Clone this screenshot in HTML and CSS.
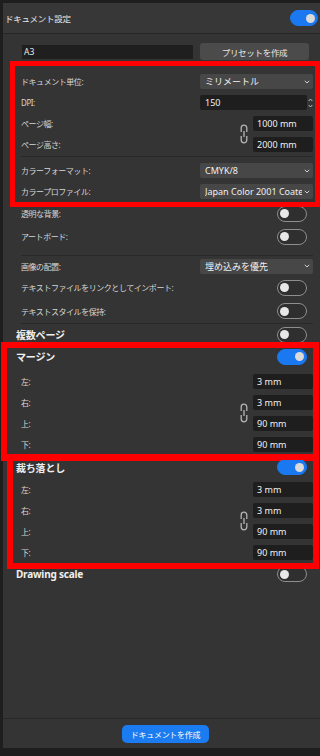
FILE: index.html
```html
<!DOCTYPE html>
<html lang="ja">
  <head>
    <meta charset="UTF-8" />
    <meta name="viewport" content="width=device-width, initial-scale=1.0" />
    <title>ドキュメント設定</title>
    <link rel="stylesheet" href="styles.css">
  </head>
  <body>
    <div class="panel">
      <div class="panel-header">
        <span class="panel-title">ドキュメント設定</span>
        <span class="toggle on"></span>
      </div>

      <div class="panel-body">
        <div class="preset-row">
          <span class="preset-name">A3</span>
          <button class="btn-grey">プリセットを作成</button>
        </div>

        <div class="mark mark-doc">
          <div class="row">
            <span class="label">ドキュメント単位:</span>
            <span class="select"><span class="select-text">ミリメートル</span><svg class="chev" viewBox="0 0 6 4"><path d="M0.8 0.8 L3 3 L5.2 0.8" /></svg></span>
          </div>
          <div class="row">
            <span class="label">DPI:</span>
            <span class="spin">
              <span class="field">150</span>
              <svg class="spin-arrows" viewBox="0 0 5 12"><path d="M0.7 4 L2.5 2 L4.3 4 M0.7 8 L2.5 10 L4.3 8" /></svg>
            </span>
          </div>
          <div class="linked">
            <span class="label r1">ページ幅:</span>
            <span class="label r2">ページ高さ:</span>
            <svg class="chain rows-12" viewBox="0 0 8 20"><path d="M1.2 8 V4 a2.8 2.8 0 0 1 5.6 0 V8 M1.2 12 V16 a2.8 2.8 0 0 0 5.6 0 V12 M4 7 V13" /></svg>
            <span class="num r1">1000 mm</span>
            <span class="num r2">2000 mm</span>
          </div>
          <div class="sep sep-doc"></div>
          <div class="row">
            <span class="label">カラーフォーマット:</span>
            <span class="select"><span class="select-text">CMYK/8</span><svg class="chev" viewBox="0 0 6 4"><path d="M0.8 0.8 L3 3 L5.2 0.8" /></svg></span>
          </div>
          <div class="row">
            <span class="label">カラープロファイル:</span>
            <span class="select"><span class="select-text">Japan Color 2001 Coated</span><svg class="chev" viewBox="0 0 6 4"><path d="M0.8 0.8 L3 3 L5.2 0.8" /></svg></span>
          </div>
        </div>

        <div class="row row-tall">
          <span class="label">透明な背景:</span>
          <span class="toggle"></span>
        </div>
        <div class="row row-tall">
          <span class="label">アートボード:</span>
          <span class="toggle"></span>
        </div>
        <div class="sep sep-mid"></div>
        <div class="row row-place">
          <span class="label">画像の配置:</span>
          <span class="select"><span class="select-text">埋め込みを優先</span><svg class="chev" viewBox="0 0 6 4"><path d="M0.8 0.8 L3 3 L5.2 0.8" /></svg></span>
        </div>
        <div class="row row-tall">
          <span class="label">テキストファイルをリンクとしてインポート:</span>
          <span class="toggle"></span>
        </div>
        <div class="row row-style">
          <span class="label">テキストスタイルを保持:</span>
          <span class="toggle"></span>
        </div>
        <div class="sep"></div>
        <div class="row row-heading row-pages">
          <span class="heading">複数ページ</span>
          <span class="toggle"></span>
        </div>

        <div class="mark mark-margin">
          <div class="row row-heading row-margin-head">
            <span class="heading">マージン</span>
            <span class="toggle on"></span>
          </div>
          <div class="linked four margin-grid">
            <span class="label r1">左:</span>
            <span class="label r2">右:</span>
            <span class="label r3">上:</span>
            <span class="label r4">下:</span>
            <svg class="chain rows-23" viewBox="0 0 8 20"><path d="M1.2 8 V4 a2.8 2.8 0 0 1 5.6 0 V8 M1.2 12 V16 a2.8 2.8 0 0 0 5.6 0 V12 M4 7 V13" /></svg>
            <span class="num r1">3 mm</span>
            <span class="num r2">3 mm</span>
            <span class="num r3">90 mm</span>
            <span class="num r4">90 mm</span>
          </div>
        </div>

        <div class="mark mark-bleed">
          <div class="row row-heading row-bleed-head">
            <span class="heading">裁ち落とし</span>
            <span class="toggle on"></span>
          </div>
          <div class="linked four bleed-grid">
            <span class="label r1">左:</span>
            <span class="label r2">右:</span>
            <span class="label r3">上:</span>
            <span class="label r4">下:</span>
            <svg class="chain rows-23" viewBox="0 0 8 20"><path d="M1.2 8 V4 a2.8 2.8 0 0 1 5.6 0 V8 M1.2 12 V16 a2.8 2.8 0 0 0 5.6 0 V12 M4 7 V13" /></svg>
            <span class="num r1">3 mm</span>
            <span class="num r2">3 mm</span>
            <span class="num r3">90 mm</span>
            <span class="num r4">90 mm</span>
          </div>
        </div>

        <div class="row row-heading row-scale">
          <span class="heading">Drawing scale</span>
          <span class="toggle"></span>
        </div>
      </div>

      <div class="panel-footer">
        <button class="btn-blue">ドキュメントを作成</button>
      </div>
    </div>
  </body>
</html>
```

FILE: styles.css
```css
body {
  margin: 0;
  padding: 0;
  background: #1e1e1e;
  font-family: "Noto Sans", "Noto Sans CJK JP", sans-serif;
  color: #dcdcdc;
  overflow: hidden;
}
.panel {
  margin: 3px 0 0 3px;
  width: 317px;
  height: 745px;
  background: #343434;
  display: flex;
  flex-direction: column;
}
.panel-header {
  height: 30px;
  border-bottom: 1px solid #262626;
  background: #373737;
  display: flex;
  align-items: center;
  justify-content: space-between;
  padding: 0 2px 0 2px;
}
.panel-title {
  font-size: 8.5px;
  letter-spacing: -0.3px;
  color: #e6e6e6;
}
.panel-body {
  padding: 0 7px 0 18px;
  flex: 1;
}

/* preset row */
.preset-row {
  display: flex;
  align-items: center;
  height: 17px;
  margin-top: 9px;
}
.preset-name {
  width: 171px;
  height: 14px;
  margin-left: 1px;
  background: #1f1f1f;
  font-size: 8.5px;
  line-height: 14px;
  padding-left: 2px;
  box-sizing: border-box;
  color: #e8e8e8;
}
.btn-grey {
  width: 109px;
  height: 17px;
  margin-left: 7px;
  border: none;
  border-radius: 3px;
  background: #4b4b4b;
  color: #e8e8e8;
  font-family: inherit;
  font-size: 8.5px;
  letter-spacing: -0.3px;
  padding: 0;
}

/* red annotation frames */
.mark {
  position: relative;
  z-index: 1;
  outline: 5px solid #ff0000;
}
.mark-doc {
  margin: 6px -2px 0 -6px;
  padding: 5px 2px 0 6px;
}
.mark-margin {
  outline-width: 6px;
  margin: 3px 0 0 -14px;
  padding: 0 0 0 14px;
}
.mark-bleed {
  outline-width: 6px;
  margin: 11px 0 0 -8px;
  padding: 0 0 0 8px;
}

/* rows */
.row {
  display: flex;
  align-items: center;
  justify-content: space-between;
  height: 21px;
}
.row-tall {
  height: 23px;
}
.row-place {
  height: 20px;
}
.row-style {
  height: 24px;
}
.label {
  font-size: 8px;
  letter-spacing: -0.45px;
  color: #d6d6d6;
  white-space: nowrap;
}
.heading {
  font-size: 10px;
  font-weight: bold;
  letter-spacing: -0.2px;
  color: #f0f0f0;
  margin-left: -5px;
}
.row-pages {
  height: 21px;
}
.row-margin-head {
  height: 17px;
  margin-bottom: 6px;
}
.row-bleed-head {
  height: 14px;
  margin-bottom: 5px;
}
.row-scale {
  height: 18px;
  margin-top: 4px;
}

.sep {
  height: 1px;
  background: #292929;
}
.sep-doc {
  margin: 1px 0 3px;
}
.sep-mid {
  margin: 7px 0 0;
}

/* controls */
.select {
  width: 113px;
  height: 15px;
  background: #474747;
  border-radius: 2px;
  display: flex;
  align-items: center;
  padding: 0 3px 0 5px;
  box-sizing: border-box;
  font-size: 9px;
  color: #f0f0f0;
}
.select-text {
  flex: 1;
  overflow: hidden;
  white-space: nowrap;
}
.chev {
  width: 6px;
  height: 4px;
  margin-left: 2px;
  fill: none;
  stroke: #cfcfcf;
  stroke-width: 1;
}
.spin {
  display: flex;
  align-items: center;
}
.field {
  width: 107px;
  height: 15px;
  background: #1e1e1e;
  border-radius: 2px;
  font-size: 9px;
  line-height: 15px;
  padding-left: 5px;
  box-sizing: border-box;
  color: #f0f0f0;
}
.spin-arrows {
  width: 5px;
  height: 12px;
  margin-left: 1px;
  fill: none;
  stroke: #c8c8c8;
  stroke-width: 0.9;
}
.num {
  width: 60px;
  height: 15px;
  background: #1e1e1e;
  border-radius: 2px;
  font-size: 9px;
  line-height: 15px;
  padding-left: 4px;
  box-sizing: border-box;
  color: #f0f0f0;
  grid-column: 3;
}

.linked {
  display: grid;
  grid-template-columns: 1fr 13px 60px;
  grid-auto-rows: 21px;
  align-items: center;
}
.linked .label {
  grid-column: 1;
}
.r1 { grid-row: 1; }
.r2 { grid-row: 2; }
.r3 { grid-row: 3; }
.r4 { grid-row: 4; }
.chain {
  grid-column: 2;
  width: 8px;
  height: 20px;
  fill: none;
  stroke: #b4b4b4;
  stroke-width: 1.3;
}
.rows-12 { grid-row: 1 / 3; }
.rows-23 { grid-row: 2 / 4; }
.margin-grid {
  margin-bottom: -6px;
}
.bleed-grid {
  margin-bottom: -2px;
}

.toggle {
  width: 30px;
  height: 16px;
  border-radius: 8px;
  border: 1.5px solid #8e8e8e;
  background: #2f2f2f;
  box-sizing: border-box;
  display: flex;
  align-items: center;
  padding: 0 2px;
  margin-right: 6px;
}
.toggle::after {
  content: "";
  width: 9px;
  height: 9px;
  border-radius: 50%;
  background: #e8e8e8;
}
.toggle.on {
  background: #1a78f0;
  border-color: #1a78f0;
  justify-content: flex-end;
}
.toggle.on::after {
  background: #dadada;
}
.panel-header .toggle {
  width: 28px;
  margin-right: 0;
}

/* footer */
.panel-footer {
  border-top: 1px solid #272727;
  padding: 6px 0 5px;
  display: flex;
  justify-content: center;
}
.btn-blue {
  width: 87px;
  height: 18px;
  margin-left: 8px;
  border: none;
  border-radius: 5px;
  background: #1a7cf0;
  color: #ffffff;
  font-family: inherit;
  font-size: 8px;
  letter-spacing: -0.3px;
  padding: 0;
}
```
